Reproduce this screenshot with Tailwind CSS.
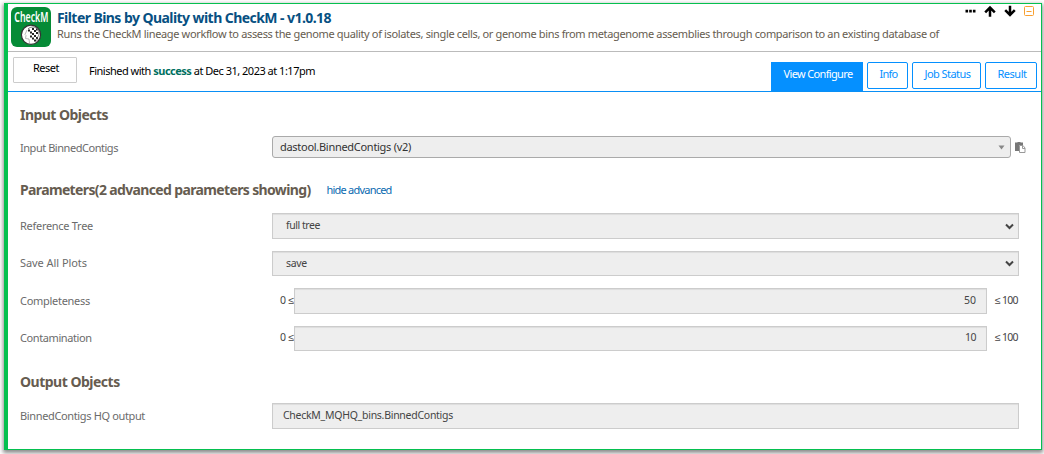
<!DOCTYPE html>
<html lang="en">
<head>
<meta charset="utf-8">
<title>Filter Bins by Quality with CheckM</title>
<script src="https://cdn.jsdelivr.net/npm/@tailwindcss/browser@4"></script>
</head>
<body class="bg-white h-[454px] pt-[3px] pl-1 font-['Noto_Sans',sans-serif] text-[11px] leading-4 overflow-hidden whitespace-nowrap">
<div class="w-[1038px] h-[447px] border border-l-4 border-[#05c04f] bg-white shadow-[0_2px_4px_1px_rgba(0,0,0,0.45)] flex flex-col">
  <header class="h-12 shrink-0 border-b border-[#bbb] flex">
    <svg class="ml-[3px] mt-[3px] shrink-0" width="40" height="40" viewBox="0 0 40 40">
      <rect width="40" height="40" rx="6" fill="#058b36"/>
      <text transform="translate(3.300 15.300) scale(.63 1)" font-family="Noto Sans" font-weight="600" font-size="14" fill="#fff">CheckM</text>
      <circle cx="20" cy="27.800" r="9.600" fill="#fff" stroke="#333" stroke-width="1.200"/>
      <path d="M17 22.500h2v2h-2zM21 21h2v2h-2zM19 24.500h2v2h-2zM23 23h2v2h-2zM21 26h2v2h-2zM25 25h2v2h-2zM23 28h2v2h-2zM21 30.500h2v2h-2zM25 30h2v2h-2zM23 32.500h2v2h-2zM19 28.500h2v2h-2zM25 21.500h1.500v2H25z" fill="#222"/>
      <path d="M17 22c3-3 8-2.500 10 1s.500 6-1 8v4" fill="none" stroke="#555" stroke-width=".8"/>
      <path d="M16 23l-2 4.500 1 1-.5 3 3.500.5.500 4" fill="none" stroke="#aaa" stroke-width=".8"/>
    </svg>
    <div class="ml-1.5 mt-[5px]">
      <h1 class="text-[14px] leading-[18px] font-bold text-[#075082] tracking-[-0.561px]">Filter Bins by Quality with CheckM - v1.0.18</h1>
      <p class="leading-[14px] text-[#665c50] tracking-[-0.35px]">Runs the CheckM lineage workflow to assess the genome quality of isolates, single cells, or genome bins from metagenome assemblies through comparison to an existing database of</p>
    </div>
    <div class="ml-auto mr-[6px] flex h-3.5 items-center gap-2">
      <svg width="11" height="12" viewBox="0 0 11 12"><path d="M.5 4.800h2.600v2.600H.5zM4.200 4.800h2.600v2.600H4.200zM7.900 4.800h2.600v2.600H7.900z"/></svg>
      <svg width="12" height="12" viewBox="0 0 12 12" fill="none" stroke="#000" stroke-width="2.500"><path d="M6 11.700V2.500M1.200 7.300L6 2.500l4.800 4.800"/></svg>
      <svg width="12" height="12" viewBox="0 0 12 12" fill="none" stroke="#000" stroke-width="2.500"><path d="M6 .8V10M1.200 5.200L6 10l4.800-4.800"/></svg>
      <svg width="11" height="11" viewBox="0 0 11 11" fill="none" stroke="#f9a030"><rect x=".5" y=".5" width="9" height="9" rx="1"/><path d="M2.500 5.500h5"/></svg>
    </div>
  </header>
  <div class="h-10 shrink-0 border-b border-[#0a8ff5] flex items-start">
    <button class="ml-[5px] mt-[5px] h-[26px] w-16 border border-[#ccc] pb-[5px] pl-0.5 rounded-[1px] tracking-[-0.5px]">Reset</button>
    <p class="ml-3 mt-[11px] text-black tracking-[-0.497px]">Finished with <b class="text-[#00705f]">success</b> at Dec 31, 2023 at 1:17pm</p>
    <nav class="ml-auto mr-1 mt-[10px] flex gap-1 text-[#0590ff] *:rounded-[2px] *:border *:border-[#0590ff] *:h-[27px] *:pb-1 *:pl-0.5">
      <button class="w-[92px] h-[29px]! pb-1.5! bg-[#0590ff] text-white rounded-none! tracking-[-0.646px]">View Configure</button>
      <button class="w-[41px] tracking-[-0.742px]">Info</button>
      <button class="w-[69px] tracking-[-0.552px]">Job Status</button>
      <button class="w-[52px] tracking-[-0.487px]">Result</button>
    </nav>
  </div>
  <main class="pl-3 text-[#6b6b6b]">
    <h2 class="mt-[13px] h-5 leading-5 text-[14px] font-bold text-[#665c50] tracking-[-0.538px]">Input Objects</h2>
    <div class="mt-[11px] h-[22px] flex items-center">
      <div class="w-[252px] pt-0.5 tracking-[-0.46px]">Input BinnedContigs</div>
      <div class="w-[739px] h-[22px] rounded-[3px] border border-[#aaa] bg-[#eee] text-[#333] flex items-center justify-between pl-[7px] pr-[5px] tracking-[-0.285px]">dastool.BinnedContigs (v2)<svg width="7" height="5" viewBox="0 0 7 5"><path d="M.5.5h6l-3 4z" fill="#888"/></svg></div>
      <svg class="ml-1" width="11" height="11" viewBox="0 0 11 11"><path d="M0 .5h2.500V0h3v.5H8V3H5L4 4v5H0z" fill="#777"/><path d="M4.500 3.500h3.500l2 2.500v4.500H4.500z" fill="#fff" stroke="#999"/><path d="M7.500 3.500V6.500H10" fill="none" stroke="#999"/></svg>
    </div>
    <h2 class="mt-[22px] h-5 leading-5 text-[14px] font-bold text-[#665c50] flex tracking-[-0.64px]">Parameters(2 advanced parameters showing)<a class="ml-4 text-[11px] font-normal text-[#0a6ab0] tracking-[-0.786px]">hide advanced</a></h2>
    <div class="mt-[13px] h-[26px] flex items-center">
      <div class="w-[252px] tracking-[-0.286px]">Reference Tree</div>
      <div class="w-[747px] h-full border border-[#ccc] bg-[#eee] text-[#444] shadow-[inset_0_1px_1px_rgba(0,0,0,0.075)] flex items-center justify-between pl-[13px] pr-1 pb-0.5 text-[10.5px] tracking-[-0.446px]">full tree<svg class="mt-0.5" width="9" height="7" viewBox="0 0 9 7"><path d="M1 1.500l3.500 3.500L8 1.500" fill="none" stroke="#444" stroke-width="2"/></svg></div>
    </div>
    <div class="mt-3 h-[25px] flex items-center">
      <div class="w-[252px] pb-px tracking-[-0.059px]">Save All Plots</div>
      <div class="w-[747px] h-full border border-[#ccc] bg-[#eee] text-[#444] shadow-[inset_0_1px_1px_rgba(0,0,0,0.075)] flex items-center justify-between pl-[13px] pr-1 pb-0.5 text-[10.5px] tracking-[-0.297px]">save<svg class="mt-0.5" width="9" height="7" viewBox="0 0 9 7"><path d="M1 1.500l3.500 3.500L8 1.500" fill="none" stroke="#444" stroke-width="2"/></svg></div>
    </div>
    <div class="mt-3 h-[26px] flex items-center">
      <div class="w-[252px] tracking-[-0.285px]">Completeness</div>
      <div class="w-[22px] pl-2 pb-0.5 text-[#444] text-[10.5px] tracking-[-0.167px]">0 ≤</div>
      <div class="w-[693px] h-full border border-[#ccc] bg-[#eee] text-[#444] shadow-[inset_0_1px_1px_rgba(0,0,0,0.075)] flex items-center justify-end pr-2.5 pb-0.5 text-[10.5px]">50</div>
      <div class="pl-2 pb-0.5 text-[#444] text-[10.5px] tracking-[-0.75px]">≤ 100</div>
    </div>
    <div class="mt-3 h-[25px] flex items-center">
      <div class="w-[252px] pb-px tracking-[-0.4px]">Contamination</div>
      <div class="w-[22px] pl-2 pb-[3px] text-[#444] text-[10.5px] tracking-[-0.167px]">0 ≤</div>
      <div class="w-[693px] h-full border border-[#ccc] bg-[#eee] text-[#444] shadow-[inset_0_1px_1px_rgba(0,0,0,0.075)] flex items-center justify-end pr-2.5 pb-[3px] text-[10.5px] tracking-[-0.5px]">10</div>
      <div class="pl-2 pb-[3px] text-[#444] text-[10.5px] tracking-[-0.75px]">≤ 100</div>
    </div>
    <h2 class="mt-[21px] h-5 leading-5 text-[14px] font-bold text-[#665c50] tracking-[-0.5px]">Output Objects</h2>
    <div class="mt-[11px] h-[26px] flex items-center">
      <div class="w-[252px] tracking-[-0.358px]">BinnedContigs HQ output</div>
      <div class="w-[747px] h-full border border-[#ccc] bg-[#eee] text-[#444] shadow-[inset_0_1px_1px_rgba(0,0,0,0.075)] flex items-center pl-[10px] pb-0.5 text-[10.5px] tracking-[-0.27px]">CheckM_MQHQ_bins.BinnedContigs</div>
    </div>
  </main>
</div>
</body>
</html>
